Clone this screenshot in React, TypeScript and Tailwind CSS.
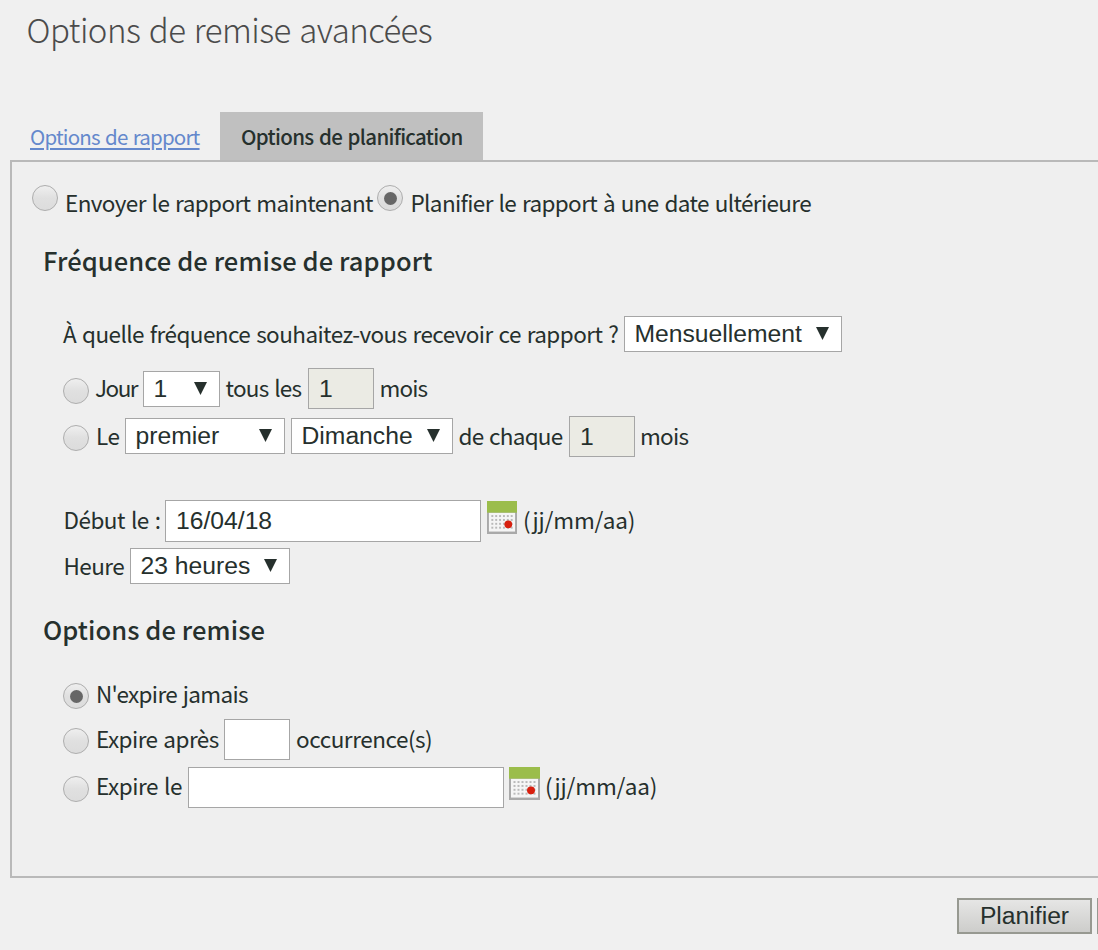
import type { ReactNode } from "react";

function Label({ children, className = "tracking-[-0.55px]" }: { children: ReactNode; className?: string }) {
  return (
    <span className={`block h-[42px] shrink-0 whitespace-nowrap text-[22.5px] leading-[42px] [word-spacing:1.4px] ${className}`}>
      {children}
    </span>
  );
}

function Radio({ checked = false, className = "" }: { checked?: boolean; className?: string }) {
  return (
    <span
      role="radio"
      aria-checked={checked}
      className={`flex size-[26px] shrink-0 items-center justify-center rounded-full border border-[#adadad] bg-linear-to-b from-[#efefef] via-[#e0e0e0] to-[#dcdcdc] ${className}`}
    >
      {checked && <span className="size-[13px] rounded-full bg-[#666666]" />}
    </span>
  );
}

function Select({ value, className = "" }: { value: string; className?: string }) {
  return (
    <div
      role="combobox"
      className={`flex h-9 shrink-0 items-center justify-between border border-[#a6a6a6] bg-white pr-[12px] pl-[9.5px] font-['Liberation_Sans',Arial,sans-serif] text-[24.7px] leading-[34px] tracking-normal whitespace-nowrap ${className}`}
    >
      <span>{value}</span>
      <svg width="13" height="13" viewBox="0 0 13 13" className="-mt-[2px] shrink-0" fill="#26302d">
        <path d="M0 0H13L6.5 13Z" />
      </svg>
    </div>
  );
}

function Field({ value = "", className = "" }: { value?: string; className?: string }) {
  return (
    <input
      defaultValue={value}
      className={`block shrink-0 border border-[#a6a6a6] pl-[10px] font-['Liberation_Sans',Arial,sans-serif] text-[24.7px] tracking-normal outline-none ${className}`}
    />
  );
}

function CalendarIcon({ className = "" }: { className?: string }) {
  const columns = [5, 9, 13, 17, 21, 25];
  const lines = [15, 19, 23, 27];
  return (
    <svg viewBox="0 0 31 34" preserveAspectRatio="none" className={`block shrink-0 ${className}`}>
      <rect x="0" y="0" width="31" height="34" fill="#a9a9a9" />
      <rect x="2" y="12" width="27" height="19.5" fill="#f5f5f5" />
      <rect x="0" y="0" width="31" height="12" fill="#9bbd4b" />
      {lines.map((y) => columns.map((x) => <rect key={`${x}-${y}`} x={x - 0.5} y={y - 0.5} width="2" height="2" fill="#b9b9b9" />))}
      <circle cx="22" cy="24" r="4" fill="#d8200f" />
    </svg>
  );
}

export default function App() {
  return (
    <div className="h-[950px] w-full overflow-hidden bg-[#f0f0f0] font-['Noto_Sans_CJK_SC','Noto_Sans',sans-serif] text-[#26302d]">
      <h1 className="h-[112px] pl-[26.5px] text-[33px] leading-[58px] font-light tracking-[-0.54px] whitespace-nowrap text-[#4b4b4b] [word-spacing:1.7px]">
        Options de remise avancées
      </h1>

      <div className="flex h-12 text-[20.5px] leading-[48px] whitespace-nowrap">
        <a className="ml-[30px] w-[190px] shrink-0 tracking-[-0.8px] text-[#6488cc] [word-spacing:1.4px]">
          <span className="underline decoration-2 underline-offset-[3px]">Options de rapport</span>
        </a>
        <div className="w-[263px] shrink-0 bg-[#c0c0c0] pl-[21px] font-medium tracking-[-0.68px] [word-spacing:1.6px]">Options de planification</div>
      </div>

      <main className="ml-[10px] h-[718px] border-2 border-r-0 border-[#b9b9b9] bg-[#efefef]">
        <div className="flex h-[77px] pt-[19px] pl-5">
          <Radio className="mt-1" />
          <Label className="ml-[7px] w-[312px] tracking-[-0.6px]">Envoyer le rapport maintenant</Label>
          <Radio checked className="mt-1" />
          <Label className="ml-[7.5px] tracking-[-0.63px]">Planifier le rapport à une date ultérieure</Label>
        </div>

        <h2 className="h-[73px] pl-[31px] text-[25.5px] leading-[42px] font-medium tracking-[0.08px] whitespace-nowrap">
          Fréquence de remise de rapport
        </h2>

        <div className="flex h-14 pl-[51px]">
          <Label className="w-[561px] tracking-[-0.56px]">À quelle fréquence souhaitez-vous recevoir ce rapport ?</Label>
          <Select value="Mensuellement" className="mt-1 w-[218px]" />
        </div>

        <div className="flex h-12 pl-[51px]">
          <Radio className="mt-[10px]" />
          <Label className="-mt-[2px] ml-[6px] w-[48px] tracking-[-1.5px]">Jour</Label>
          <Select value="1" className="mt-[3px] w-[77px]" />
          <Label className="-mt-[2px] ml-[5.5px] w-[82.5px] tracking-[-0.75px]">tous les</Label>
          <Field value="1" className="h-[41px] w-[66px] bg-[#ebebe4]" />
          <Label className="-mt-[2px] ml-[5.5px] tracking-[-0.85px]">mois</Label>
        </div>

        <div className="flex h-[84px] pl-[51px]">
          <Radio className="mt-[9px]" />
          <Label className="-mt-[2px] ml-[7px] w-[29px] tracking-[-0.55px]">Le</Label>
          <Select value="premier" className="mt-[2px] w-[160px]" />
          <Select value="Dimanche" className="mt-[2px] ml-[6px] w-[162px]" />
          <Label className="-mt-[2px] ml-[5.5px] w-[110.5px] tracking-[-0.75px]">de chaque</Label>
          <Field value="1" className="h-[41px] w-[66px] bg-[#ebebe4]" />
          <Label className="-mt-[2px] ml-[5px] tracking-[-0.75px]">mois</Label>
        </div>

        <div className="flex h-12 pl-[51px]">
          <Label className="-mt-[2px] w-[102px] pl-[0.5px] tracking-[-0.5px]">Début le :</Label>
          <Field value="16/04/18" className="h-[42px] w-[316px] bg-white" />
          <CalendarIcon className="mt-px ml-[6px] h-[33px] w-[30px]" />
          <Label className="-mt-[2px] ml-[6px] tracking-[-0.15px]">(jj/mm/aa)</Label>
        </div>

        <div className="flex h-[59px] pl-[51px]">
          <Label className="-mt-[4px] w-[67px] pl-[0.5px] tracking-[-0.55px]">Heure</Label>
          <Select value="23 heures" className="w-[160px]" />
        </div>

        <h2 className="h-[65px] pl-[31px] text-[25.5px] leading-[43px] font-medium tracking-[0.08px] whitespace-nowrap">
          Options de remise
        </h2>

        <div className="flex h-[47px] pl-[51px]">
          <Radio checked className="mt-[11px]" />
          <Label className="ml-[7px] tracking-[-0.67px]">N'expire jamais</Label>
        </div>

        <div className="flex h-12 pl-[51px]">
          <Radio className="mt-[9px]" />
          <Label className="-mt-[2px] ml-[7px] w-[128px] tracking-[-0.55px]">Expire après</Label>
          <Field className="h-[41px] w-[66px] bg-white" />
          <Label className="-mt-[2px] ml-[6px] tracking-[-0.46px]">occurrence(s)</Label>
        </div>

        <div className="flex h-12 pl-[51px]">
          <Radio className="mt-[9px]" />
          <Label className="-mt-[3px] ml-[7px] w-[92px] tracking-[-0.46px]">Expire le</Label>
          <Field className="h-[41px] w-[316px] bg-white" />
          <CalendarIcon className="ml-[5px] h-[33px] w-[31px]" />
          <Label className="-mt-[3px] ml-[5px] tracking-[-0.15px]">(jj/mm/aa)</Label>
        </div>
      </main>

      <div className="flex gap-[5px] pt-5 pl-[957px]">
        <button className="h-[36px] w-[135px] shrink-0 border-2 border-[#979991] bg-linear-to-b from-[#e6e6e5] to-[#cdcdcb] font-['Liberation_Sans',Arial,sans-serif] text-[24.7px] leading-[30px]">
          Planifier
        </button>
        <span className="h-[36px] w-[135px] shrink-0 border-2 border-[#979991] bg-[#dadad9]" />
      </div>
    </div>
  );
}
